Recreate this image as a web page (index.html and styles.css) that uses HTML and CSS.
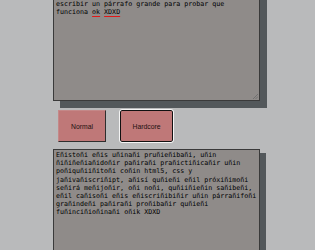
FILE: index.html
```html
<!DOCTYPE html>
<html lang="es">
<head>
    <meta charset="UTF-8">
    <meta name="viewport" content="width=device-width, initial-scale=1.0">
    <title>Traductor</title>
    <link rel="stylesheet" href="styles.css">
</head>
<body>
<div class="page">
    <div class="editor input-box">
        <div class="text">Esto es una prueba, un ejemplo para practicar un
poquito con html5, css y javascript, así que el
próximo será mejor, o no, quien sabe, el caso es
escribir un párrafo grande para probar que
funciona <span class="typo">ok</span> <span class="typo">XDXD</span></div>
        <svg class="grip" width="6" height="6" viewBox="0 0 6 6">
            <path d="M1 6 L6 1 M3.5 6 L6 3.5" stroke="#6a6a6a" stroke-width="0.8"/>
        </svg>
    </div>

    <div class="buttons">
        <button class="btn btn-normal">Normal</button>
        <button class="btn btn-hard">Hardcore</button>
    </div>

    <div class="editor output-box">
        <div class="text">Eñistoñi eñis uñinañi pruñieñibañi, uñin
ñiñiñeñiañidoñir pañirañi prañictiñicañir uñin
poñiquñiiñitoñi coñin html5, css y
jañivañiscriñipt, añisí quñieñi eñil próxiñimoñi
señirá meñijoñir, oñi noñi, quñiiñieñin sañibeñi,
eñil cañisoñi eñis eñiscriñibiñir uñin párrañifoñi
grañindeñi pañirañi proñibañir quñieñi
fuñinciñioñinañi oñik XDXD</div>
    </div>
</div>
</body>
</html>
```

FILE: styles.css
```css
body {
    margin: 0;
    background-color: #b9babb;
    overflow: hidden;
}
.page {
    padding-left: 53px;
}
.editor {
    position: relative;
    width: 202px;
    border: 1px solid #3a3a3a;
    padding: 2px 1px 2px 2px;
    background-color: #8f8b89;
    box-shadow: 7px 7px 0 #53585b;
    font-family: "DejaVu Sans Mono", monospace;
    font-size: 6.67px;
    line-height: 8.2px;
    color: #000;
}
.text {
    white-space: pre;
}
.input-box {
    margin-top: -28px;
    height: 123px;
}
.output-box {
    margin-top: 7px;
    padding-top: 1px;
    height: 110px;
    box-shadow: 6px 4px 0 #53585b;
}
.typo {
    text-decoration: underline solid #e01818;
    text-decoration-thickness: 1px;
    text-underline-offset: 1.5px;
}
.grip {
    position: absolute;
    right: 1px;
    bottom: 1px;
}
.buttons {
    display: flex;
    gap: 13px;
    padding-left: 5px;
    margin-top: 9px;
}
.btn {
    height: 32px;
    margin: 0;
    padding: 0;
    background-color: #bf7878;
    font-family: "Liberation Sans", Arial, sans-serif;
    font-size: 6.8px;
    color: #1e1010;
}
.btn-normal {
    width: 48px;
    border: 1px solid;
    border-color: #c48888 #2e2e2e #2e2e2e #c48888;
}
.btn-hard {
    width: 53px;
    margin-left: 1px;
    border: 1px solid #111;
    border-radius: 2px;
    outline: 1px solid #f4f4f4;
}
```
